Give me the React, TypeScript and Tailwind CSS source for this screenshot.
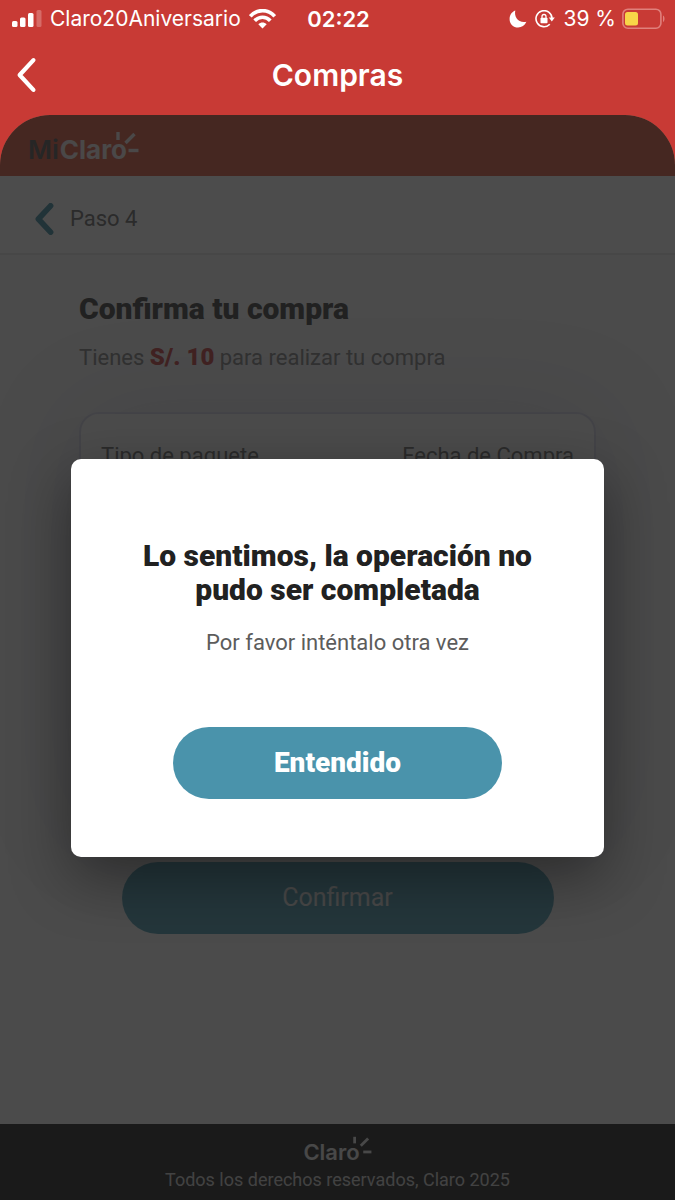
import { useState } from 'react'

function SignalIcon() {
  return (
    <svg width="30" height="18" viewBox="0 0 30 18" fill="white" aria-hidden="true">
      <rect x="0" y="11" width="5.500" height="6" rx="1.500" />
      <rect x="8" y="7.500" width="5.500" height="9.500" rx="1.500" />
      <rect x="16" y="3" width="5.500" height="14" rx="1.500" />
      <rect x="24.500" y="0" width="5" height="17" rx="1.500" opacity="0.25" />
    </svg>
  )
}

function WifiIcon() {
  return (
    <svg width="27" height="20" viewBox="0 0 27 20" fill="none" stroke="white" strokeWidth="3.600" aria-hidden="true">
      <path d="M1.300 7.300C8-0.300 19-0.300 25.700 7.300" />
      <path d="M5.700 11.800C10 7 17 7 21.300 11.800" />
      <path d="M13.500 19.500L9.300 15.200C11.700 12.900 15.300 12.900 17.700 15.200Z" fill="white" stroke="none" />
    </svg>
  )
}

function MoonIcon() {
  return (
    <svg width="18" height="18" viewBox="0 0 18 18" fill="white" aria-hidden="true">
      <path d="M6.300 0.600C4.800 7.300 9.700 13.500 17.400 11.800C15.800 15.400 12.700 17.500 9.100 17.500C4.300 17.500 0.600 13.900 0.600 9.200C0.600 5.300 2.700 2 6.300 0.600Z" />
    </svg>
  )
}

function RotationLockIcon() {
  return (
    <svg width="20" height="18" viewBox="0 0 20 18" fill="none" stroke="white" strokeWidth="1.600" aria-hidden="true">
      <path d="M14.800 14.200A8 8 0 1 1 17 8.500" />
      <path d="M13.800 7.500H19.800L16.800 11.500Z" fill="white" stroke="none" />
      <rect x="5.500" y="7.700" width="7" height="5.500" rx="0.800" fill="white" stroke="none" />
      <path d="M7 8V6.500A2 2 0 0 1 11 6.500V8" strokeWidth="1.300" />
    </svg>
  )
}

function BatteryIcon() {
  return (
    <svg width="43" height="22" viewBox="0 0 43 22" fill="none" aria-hidden="true">
      <rect x="0.900" y="1.200" width="38" height="19" rx="5" stroke="#e0807c" strokeWidth="1.600" />
      <rect x="3" y="4" width="13" height="13.500" rx="2.500" fill="#f8d648" />
      <path d="M41 7.500C43 8.500 43 13 41 14Z" fill="#e0807c" />
    </svg>
  )
}

function ChevronIcon({ className }: { className: string }) {
  return (
    <svg className={className} viewBox="0 0 20 34" fill="none" stroke="currentColor" strokeLinecap="round" strokeLinejoin="round" aria-hidden="true">
      <path d="M17 3L4 17L17 31" />
    </svg>
  )
}

function Rays({ className }: { className: string }) {
  return (
    <svg className={className} viewBox="0 0 24 22" fill="none" stroke="currentColor" strokeWidth="3.400" aria-hidden="true">
      <path d="M3 1V9" />
      <path d="M10.500 12L19.500 3" />
      <path d="M13.500 19.500H23.500" />
    </svg>
  )
}

function StatusBar() {
  return (
    <div className="grid grid-cols-[1fr_auto_1fr] items-center pt-[3px] pr-2.5 pl-3 text-[21px] leading-8 text-white">
      <div className="flex items-center gap-2">
        <SignalIcon />
        <span>Claro20Aniversario</span>
        <WifiIcon />
      </div>
      <span className="text-[22px] font-semibold">02:22</span>
      <div className="flex items-center justify-end gap-2">
        <MoonIcon />
        <RotationLockIcon />
        <div className="flex items-center gap-1.5">
          <span>39 %</span>
          <BatteryIcon />
        </div>
      </div>
    </div>
  )
}

function NavBar() {
  return (
    <header className="grid grid-cols-[1fr_auto_1fr] items-center px-3.5 py-4.5 text-white">
      <button type="button" aria-label="Atrás" className="w-6">
        <ChevronIcon className="h-9 w-6 stroke-[4]" />
      </button>
      <h1 className="text-[30px] leading-11 font-semibold">Compras</h1>
    </header>
  )
}

function Dialog({ onClose }: { onClose: () => void }) {
  return (
    <div className="absolute inset-0 flex items-center justify-center rounded-t-[50px] bg-black/70">
      <div
        role="dialog"
        aria-modal="true"
        aria-labelledby="dialog-title"
        className="flex w-[79%] flex-col items-center rounded-[10px] bg-white px-8 pt-20 pb-[58px] text-center shadow-[0_20px_60px_rgba(0,0,0,0.4)]"
      >
        <h2 id="dialog-title" className="max-w-[440px] text-[30px] leading-[34px] font-black text-[#212121]">
          Lo sentimos, la operación no pudo ser completada
        </h2>
        <p className="mt-5 text-[22px] leading-8 text-[#5c5c5c]">Por favor inténtalo otra vez</p>
        <button
          type="button"
          onClick={onClose}
          className="mt-17 h-18 w-[70%] rounded-full bg-[#4a93ab] text-[28px] font-black text-white"
        >
          Entendido
        </button>
      </div>
    </div>
  )
}

function App() {
  const [isOpen, setIsOpen] = useState(true)

  return (
    <div className="flex min-h-screen flex-col bg-[#c83a35] font-['Inter',sans-serif]">
      <StatusBar />
      <NavBar />

      <div className="relative flex grow flex-col font-['Roboto',sans-serif]">
        <div className="flex h-[61px] items-center rounded-t-[50px] bg-[#e68270] px-7 pt-2 font-['Inter',sans-serif] text-[26px] font-semibold">
          <span className="text-[#808080]">Mi</span>
          <span className="relative ml-px font-bold text-[#f8f0f0]">
            Claro
            <Rays className="absolute bottom-4 left-full -ml-3 h-[22px] w-6" />
          </span>
        </div>

        <div className="flex h-[79px] items-center gap-3.5 border-b-2 border-[#ededed] bg-white px-8 pt-2">
          <button type="button" aria-label="Paso anterior" className="text-[#71aabb]">
            <ChevronIcon className="h-8 w-6 stroke-[6]" />
          </button>
          <span className="text-[22px] text-[#8f8f8f]">Paso 4</span>
        </div>

        <main className="flex grow flex-col bg-[#fafafa] px-[79px] pt-9">
          <h2 className="text-[30px] leading-9 font-black text-[#707070]">Confirma tu compra</h2>
          <p className="mt-3 text-[22px] leading-9 text-[#a3a3a3]">
            Tienes <strong className="text-2xl leading-9 font-black text-[#d87070]">S/. 10</strong> para realizar tu compra
          </p>
          <div className="mt-9 flex min-h-[418px] items-start justify-between rounded-[20px] border-2 border-[#e2e2ee] px-5 pt-6 text-[22px] leading-9 text-[#929292] shadow-[0_0_100px_rgba(80,80,130,0.15)]">
            <span>Tipo de paquete</span>
            <span>Fecha de Compra</span>
          </div>
          <button type="button" className="mx-auto mt-8 h-18 w-[432px] max-w-full rounded-full bg-[#7bb6c6] text-[25px] text-[#f0f0f0]">
            Confirmar
          </button>
        </main>

        <footer className="flex flex-col items-center bg-[#595959] pt-3 pb-2 text-lg text-[#f0f0f0]">
          <span className="relative mr-3 font-['Inter',sans-serif] text-[22px] leading-8 font-semibold">
            Claro
            <Rays className="absolute bottom-3.5 left-full -ml-2 h-[18px] w-5" />
          </span>
          <p className="leading-6 text-[#dddddd]">Todos los derechos reservados, Claro 2025</p>
        </footer>

        {isOpen && <Dialog onClose={() => setIsOpen(false)} />}
      </div>
    </div>
  )
}

export default App
